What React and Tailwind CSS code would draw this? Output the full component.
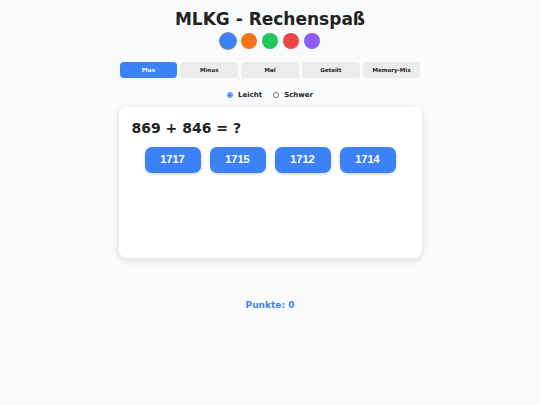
import { useState } from "react"

const colors = ["bg-[#3b82f6]", "bg-[#f97316]", "bg-[#22c55e]", "bg-[#ef4444]", "bg-[#8b5cf6]"]
const tabs = ["Plus", "Minus", "Mal", "Geteilt", "Memory-Mix"]
const answers = [1717, 1715, 1712, 1714]

export default function App() {
  const [tab, setTab] = useState(0)
  const [color, setColor] = useState(0)
  const [level, setLevel] = useState("leicht")

  return (
    <div className="min-h-[405px] bg-[#f8fafc] font-['DejaVu_Sans',sans-serif] text-[#222]">
      <div className="mx-auto w-[303px] pt-[9px]">
        <h1 className="text-center text-[17px] font-bold leading-[21px]">MLKG - Rechenspaß</h1>
        <div className="mt-[3px] flex justify-center gap-[5px]">
          {colors.map((c, i) => (
            <button
              key={c}
              onClick={() => setColor(i)}
              className={`size-[16px] rounded-full ${c} ${color === i ? "ring-1 ring-[#1e3a8a]/60" : ""}`}
            />
          ))}
        </div>

        <div className="mt-[13px] flex gap-[3px] px-px">
          {tabs.map((t, i) => (
            <button
              key={t}
              onClick={() => setTab(i)}
              className={`h-[16px] flex-1 rounded-[4px] text-[5.5px] font-bold ${tab === i ? "bg-[#3b82f6] text-white" : "bg-[#ececec] text-[#222]"}`}
            >
              {t}
            </button>
          ))}
        </div>

        <div className="mt-[12px] flex items-center justify-center gap-[11px] text-[7px] font-bold">
          {["Leicht", "Schwer"].map((l) => (
            <label key={l} className="flex items-center gap-[5px]">
              <input
                type="radio"
                checked={level === l.toLowerCase()}
                onChange={() => setLevel(l.toLowerCase())}
                className="size-[6px] accent-[#3b82f6]"
              />
              {l}
            </label>
          ))}
        </div>

        <div className="mt-[6px] h-[151px] rounded-[8px] bg-white px-[13px] pt-[13px] shadow-[0_2px_8px_rgba(0,0,0,0.12)]">
          <div className="text-[14px] font-bold leading-[16px]">869 + 846 = ?</div>
          <div className="mt-[11px] flex justify-center gap-[9px] font-['Liberation_Sans',sans-serif]">
            {answers.map((a) => (
              <button
                key={a}
                className="h-[26px] w-[56px] rounded-[7px] bg-[#3b82f6] text-[11px] font-bold text-white shadow-[0_1px_3px_rgba(0,0,0,0.2)]"
              >
                {a}
              </button>
            ))}
          </div>
        </div>

        <div className="mt-[41px] text-center text-[9px] font-bold text-[#3b82f6]">Punkte: 0</div>
      </div>
    </div>
  )
}
